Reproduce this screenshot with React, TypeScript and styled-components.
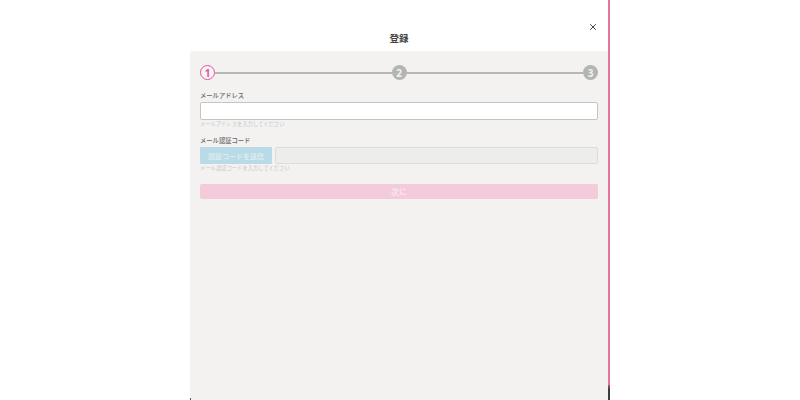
import React from 'react'
import styled, { createGlobalStyle } from 'styled-components'

const GlobalStyle = createGlobalStyle`
  html, body {
    margin: 0;
    padding: 0;
    background: #ffffff;
  }
  body {
    font-family: "Noto Sans CJK JP", "Noto Sans", sans-serif;
  }
`

const Page = styled.div`
  width: 800px;
  height: 400px;
  overflow: hidden;
  display: flex;
  justify-content: flex-start;
  padding-left: 190px;
  box-sizing: border-box;
`

const Modal = styled.div`
  width: 420px;
  height: 400px;
  box-sizing: border-box;
  display: flex;
  flex-direction: column;
  position: relative;
  border-right: 2px solid #e3739f;
`

const Header = styled.div`
  height: 51px;
  flex-shrink: 0;
  display: flex;
  align-items: flex-start;
  justify-content: center;
  padding-top: 31px;
  box-sizing: border-box;
`

const Title = styled.div`
  font-size: 9.5px;
  line-height: 14px;
  font-weight: 700;
  color: #444444;
`

const CloseButton = styled.div`
  position: absolute;
  top: 22px;
  right: 10px;
  width: 10px;
  height: 10px;
  color: #444444;
  display: flex;
`

// the window behind the modal shows through at the bottom of the edge
const EdgeShadow = styled.div`
  position: absolute;
  right: -2px;
  bottom: 0;
  width: 2px;
  height: 15px;
  background: linear-gradient(#b5557f, #3c3c3c 30%);
`

const CornerMark = styled.div`
  position: absolute;
  left: 0;
  bottom: 0;
  width: 1px;
  height: 2px;
  background: #555555;
`

const Panel = styled.div`
  flex: 1;
  background: #f3f2f1;
  border-radius: 2px 2px 0 0;
  padding: 14px 10px 0 10px;
  display: flex;
  flex-direction: column;
`

const Stepper = styled.div`
  display: flex;
  align-items: center;
  height: 15px;
  margin-bottom: 11px;
`

const StepCircle = styled.div<{ $active?: boolean }>`
  width: 15px;
  height: 15px;
  box-sizing: border-box;
  border-radius: 50%;
  flex-shrink: 0;
  display: flex;
  align-items: center;
  justify-content: center;
  font-size: 10px;
  font-weight: 700;
  line-height: 1;
  font-family: "Noto Sans", sans-serif;
  background: ${p => (p.$active ? '#f7f4f5' : '#b4b4b2')};
  color: ${p => (p.$active ? '#e0559a' : '#f2f1f0')};
  border: ${p => (p.$active ? '1.5px solid #e0559a' : 'none')};
`

const StepLine = styled.div`
  flex: 1;
  height: 2px;
  background: #b7b7b4;
`

const Label = styled.div`
  font-size: 6.3px;
  line-height: 10px;
  color: #666666;
  font-weight: 500;
  margin-bottom: 1px;
`

const Hint = styled.div`
  font-size: 5.3px;
  line-height: 8px;
  color: #c8c8c6;
`

const Field = styled.div`
  margin-bottom: 8px;
`

const TextBox = styled.div<{ $disabled?: boolean }>`
  box-sizing: border-box;
  height: ${p => (p.$disabled ? '17px' : '18px')};
  flex: 1;
  border-radius: 2px;
  background: ${p => (p.$disabled ? '#ededec' : '#ffffff')};
  border: 1px solid ${p => (p.$disabled ? '#dcdcda' : '#c4c4c2')};
`

const CodeRow = styled.div`
  display: flex;
  gap: 3px;
`

const SendButton = styled.div`
  width: 72px;
  height: 17px;
  border-radius: 1px;
  background: #b9dbe7;
  color: #e3eff3;
  font-size: 7px;
  font-weight: 500;
  display: flex;
  align-items: center;
  justify-content: center;
`

const NextButton = styled.div`
  height: 15px;
  margin-top: 4px;
  border-radius: 2px;
  background: #f3cbda;
  color: #f8ebf0;
  font-size: 8px;
  font-weight: 500;
  display: flex;
  align-items: center;
  justify-content: center;
`

function App() {
  return (
    <React.Fragment>
      <GlobalStyle />
      <Page>
        <Modal>
          <Header>
            <Title>登録</Title>
          </Header>
          <CloseButton>
            <svg width="10" height="10" viewBox="0 0 10 10" fill="none" stroke="currentColor" strokeWidth="1">
              <path d="M2.2 2.2 L7.8 7.8 M7.8 2.2 L2.2 7.8" />
            </svg>
          </CloseButton>
          <Panel>
            <Stepper>
              <StepCircle $active>1</StepCircle>
              <StepLine />
              <StepCircle>2</StepCircle>
              <StepLine />
              <StepCircle>3</StepCircle>
            </Stepper>
            <Field>
              <Label>メールアドレス</Label>
              <TextBox />
              <Hint>メールアドレスを入力してください</Hint>
            </Field>
            <Field>
              <Label>メール認証コード</Label>
              <CodeRow>
                <SendButton>認証コードを送信</SendButton>
                <TextBox $disabled />
              </CodeRow>
              <Hint>メール認証コードを入力してください</Hint>
            </Field>
            <NextButton>次に</NextButton>
          </Panel>
          <EdgeShadow />
          <CornerMark />
        </Modal>
      </Page>
    </React.Fragment>
  )
}

export default App
